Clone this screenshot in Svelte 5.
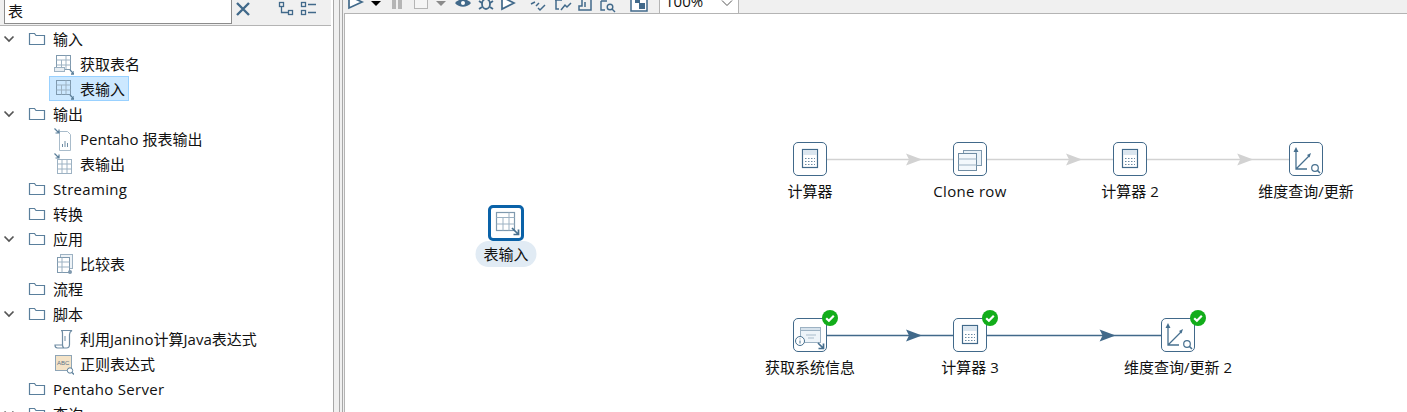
<script lang="ts">
  type Row = { label: string; kind: 'folder' | 'step'; open?: boolean; icon?: string; selected?: boolean };

  const tree: Row[] = [
    { label: '输入', kind: 'folder', open: true },
    { label: '获取表名', kind: 'step', icon: 'tablenames' },
    { label: '表输入', kind: 'step', icon: 'tablein', selected: true },
    { label: '输出', kind: 'folder', open: true },
    { label: 'Pentaho 报表输出', kind: 'step', icon: 'report' },
    { label: '表输出', kind: 'step', icon: 'tableout' },
    { label: 'Streaming', kind: 'folder' },
    { label: '转换', kind: 'folder' },
    { label: '应用', kind: 'folder', open: true },
    { label: '比较表', kind: 'step', icon: 'compare' },
    { label: '流程', kind: 'folder' },
    { label: '脚本', kind: 'folder', open: true },
    { label: '利用Janino计算Java表达式', kind: 'step', icon: 'script' },
    { label: '正则表达式', kind: 'step', icon: 'regex' },
    { label: 'Pentaho Server', kind: 'folder' },
    { label: '查询', kind: 'folder', open: true }
  ];

  // node centres on the canvas, in canvas coordinates
  const nodes = [
    { x: 465, y: 145, label: '计算器', icon: 'calc', ok: false },
    { x: 625, y: 145, label: 'Clone row', icon: 'clone', ok: false },
    { x: 785, y: 145, label: '计算器 2', icon: 'calc', ok: false },
    { x: 961, y: 145, label: '维度查询/更新', icon: 'dim', ok: false },
    { x: 465, y: 321, label: '获取系统信息', icon: 'sys', ok: true },
    { x: 625, y: 321, label: '计算器 3', icon: 'calc', ok: true },
    { x: 833, y: 321, label: '维度查询/更新 2', icon: 'dim', ok: true }
  ];

  const hops = [
    { x1: 465, x2: 625, y: 145, on: false },
    { x1: 625, x2: 785, y: 145, on: false },
    { x1: 785, x2: 961, y: 145, on: false },
    { x1: 465, x2: 625, y: 321, on: true },
    { x1: 625, x2: 833, y: 321, on: true }
  ];

  const isLatin = (s: string) => /^[\x20-\x7e]+$/.test(s);
</script>

{#snippet stepIcon(name: string)}
  <svg class="step-icon" width="24" height="24" viewBox="0 0 24 24" fill="none" stroke="#8ea5b7" stroke-width="1">
    {#if name === 'tablenames' || name === 'tablein'}
      <rect x="6.500" y="3.500" width="14" height="14" fill={name === 'tablein' ? 'none' : '#fff'} stroke="#7f99ae" />
      <path d="M6.500 8h14M6.500 13h14M11.500 8v9.500M16 3.500v14" stroke="#9db2c3" />
      {#if name === 'tablenames'}
        <rect x="4.500" y="15.500" width="10" height="4" fill="#e8eef3" stroke="#9db2c3" />
      {/if}
      <path d="M20 18l4 4M24 19v3h-3" stroke="#5b7f9a" stroke-width="1.300" />
    {:else if name === 'report'}
      <path d="M9.500 4.500h8l3 3v16h-11z" fill="#fff" stroke="#a9bccb" />
      <path d="M12.500 20v-3M15 20v-6M17.500 20v-4" stroke="#6f8ca3" />
      <path d="M4.500 1.500l4.500 4.500M9 2.500v3.500h-3.500" stroke="#5b7f9a" stroke-width="1.200" />
    {:else if name === 'tableout'}
      <rect x="7.500" y="7.500" width="14" height="14" fill="#fff" stroke="#9db2c3" />
      <path d="M7.500 12h14M7.500 17h14M12 7.500v14M17 7.500v14" stroke="#9db2c3" />
      <path d="M4.500 1.500l4.500 4.500M9 2.500v3.500h-3.500" stroke="#5b7f9a" stroke-width="1.200" />
    {:else if name === 'compare'}
      <rect x="10.500" y="2.500" width="12" height="14" fill="#eef3f7" stroke="#9db2c3" />
      <rect x="7.500" y="5.500" width="12" height="15" fill="#fff" stroke="#7f99ae" />
      <path d="M7.500 10h12M7.500 15h12M12 5.500v15" stroke="#9db2c3" />
      <circle cx="20" cy="20" r="2" fill="#7f99ae" stroke="none" />
    {:else if name === 'script'}
      <path d="M11 3.500h11c-2 1-2.500 2-2.500 4v10c0 2-1 3.500-3 3.500h-9c-2 0-2.500-1-2.500-3h7.500c0 1.500.5 2.500 1.500 2.500-1 0-1.500-1-1.500-3V6.500c0-1.500 0-3 -1.500-3z" fill="#fff" stroke="#6f8ca3" stroke-width="1.200" />
      <path d="M15 9v5" stroke="#6f8ca3" />
    {:else if name === 'regex'}
      <rect x="5.500" y="3.500" width="16" height="15" fill="#f4e3c7" stroke="#8ea5b7" />
      <text x="7" y="13" font-size="6" font-family="Liberation Sans, sans-serif" fill="#5b7289" stroke="none">ABC</text>
      <circle cx="20" cy="18.500" r="2.700" fill="#fff" stroke="#5b7f9a" />
      <path d="M22 20.500l2 2" stroke="#5b7f9a" stroke-width="1.300" />
    {/if}
  </svg>
{/snippet}

{#snippet nodeIcon(name: string)}
  <svg width="32" height="32" viewBox="0 0 32 32" fill="none">
    {#if name === 'calc'}
      <rect x="8.500" y="6.500" width="15" height="18" fill="#fff" stroke="#41698a" stroke-width="1.200" />
      <rect x="9" y="7" width="14" height="5" fill="#dbe6ef" />
      <path d="M11 15.500h10M11 18.500h10M11 21.500h10" stroke="#6b8aa3" stroke-dasharray="1.500 1.500" />
    {:else if name === 'clone'}
      <rect x="9.500" y="7.500" width="18" height="15" fill="#eaf2f8" stroke="#7f99ae" />
      <rect x="4.500" y="10.500" width="18" height="17" fill="#f3f8fc" stroke="#6f8ca3" />
      <path d="M4.500 16h18M4.500 22h18" stroke="#9db2c3" />
    {:else if name === 'dim'}
      <path d="M6 7v19h11M6 26l13-13" stroke="#47708f" stroke-width="1.300" />
      <path d="M3.500 9L6 4l2.500 5zM17 12l4-2-1.500 4.500z" fill="#47708f" />
      <circle cx="25" cy="25" r="3.300" fill="#fff" stroke="#47708f" stroke-width="1.200" />
      <path d="M27.300 27.300l2.700 2.700" stroke="#47708f" stroke-width="1.600" />
    {:else if name === 'sys'}
      <rect x="6.500" y="8.500" width="20" height="15" fill="#eef4f9" stroke="#9db2c3" />
      <rect x="6.500" y="8.500" width="20" height="3" fill="#d6e2ec" stroke="#9db2c3" />
      <path d="M12 16h10M14 19h6" stroke="#a9bccb" />
      <circle cx="6" cy="22" r="4.500" fill="#fff" stroke="#47708f" />
      <path d="M6 19.500v.8M6 21.500v3" stroke="#47708f" />
      <path d="M24 24l5 5M29.500 24.500v5h-5" stroke="#47708f" stroke-width="1.700" />
    {/if}
  </svg>
{/snippet}

<div class="app">
  <aside class="side">
    <div class="search">
      <div class="search-box">表</div>
      <svg class="clear" width="16" height="16" viewBox="0 0 16 16">
        <path d="M2 2l12 12M14 2L2 14" stroke="#41698a" stroke-width="2.400" fill="none" />
      </svg>
      <svg class="tool-a" width="16" height="16" viewBox="0 0 16 16" fill="none" stroke="#41698a" stroke-width="1.300">
        <rect x="1.500" y="1.500" width="4" height="4" />
        <rect x="10.500" y="9.500" width="4" height="4" />
        <path d="M3.500 5.500v6h7" />
      </svg>
      <svg class="tool-b" width="18" height="16" viewBox="0 0 18 16" fill="none" stroke="#41698a" stroke-width="1.300">
        <rect x="1.500" y="1.500" width="4" height="4" />
        <rect x="1.500" y="9.500" width="4" height="4" />
        <path d="M8 3.500h8M8 11.500h8" />
      </svg>
    </div>
    <ul class="tree">
      {#each tree as row}
        <li class="row" class:child={row.kind === 'step'}>
          {#if row.kind === 'folder'}
            <span class="caret">
              {#if row.open}
                <svg width="12" height="8" viewBox="0 0 12 8">
                  <path d="M1.500 1.500L6 6l4.500-4.500" fill="none" stroke="#555" stroke-width="1.700" />
                </svg>
              {/if}
            </span>
            <svg class="folder" width="18" height="14" viewBox="0 0 18 14" fill="none">
              <path d="M1.500 12.500V1.500h5l1.500 2h8.500v9z" fill="#fff" stroke="#5a7f9c" stroke-width="1.200" />
            </svg>
            <span class="label" class:latin={isLatin(row.label)}>{row.label}</span>
          {:else}
            <span class="item" class:selected={row.selected}>
              {@render stepIcon(row.icon ?? '')}
              <span class="label">{row.label}</span>
            </span>
          {/if}
        </li>
      {/each}
    </ul>
  </aside>

  <div class="sash"><span></span><span></span></div>

  <main class="work">
    <div class="toolbar">
      <svg width="18" height="13" viewBox="0 0 18 13" fill="none" stroke="#41698a" stroke-width="1.700">
        <path d="M2 -4L15 2 2 8z" fill="#fff" />
      </svg>
      <span class="drop"></span>
      <span class="pause"></span>
      <span class="stop"></span>
      <span class="drop grey"></span>
      <svg width="18" height="13" viewBox="0 0 18 13">
        <path d="M1 3c4-5 12-5 16 0-4 5-12 5-16 0z" fill="#41698a" />
        <circle cx="9" cy="3" r="2" fill="#fff" />
      </svg>
      <svg width="16" height="13" viewBox="0 0 16 13" fill="none" stroke="#41698a" stroke-width="1.800">
        <ellipse cx="8" cy="4" rx="4" ry="5" />
        <path d="M1 1l3 2M15 1l-3 2M1 9l3-2M15 9l-3-2" />
      </svg>
      <svg width="16" height="13" viewBox="0 0 16 13" fill="none" stroke="#41698a" stroke-width="1.700">
        <path d="M2 -3l12 6-12 6z" fill="#fff" />
      </svg>
      <svg width="18" height="13" viewBox="0 0 18 13" fill="none" stroke="#41698a" stroke-width="1.500">
        <path d="M1 4l4-2M6 6l3-3M8 8l2 2 5-5" />
      </svg>
      <svg width="18" height="13" viewBox="0 0 18 13" fill="none" stroke="#41698a" stroke-width="1.500">
        <path d="M1 0h7M2 0v9h3M7 10l4-5 2 2 4-4" />
      </svg>
      <svg width="14" height="13" viewBox="0 0 14 13" fill="none" stroke="#41698a" stroke-width="1.500">
        <path d="M4 -1h9v11H1V6h3zM7 2v5" />
      </svg>
      <svg width="17" height="13" viewBox="0 0 17 13" fill="none" stroke="#41698a" stroke-width="1.400">
        <path d="M1 1h6M1 1v9h4" />
        <circle cx="10" cy="7" r="2.800" />
        <path d="M12 9l3 3" />
      </svg>
      <svg width="18" height="13" viewBox="0 0 18 13">
        <rect x="1" y="-2" width="16" height="13" fill="#fff" stroke="#41698a" stroke-width="1.500" />
        <rect x="9" y="3" width="6" height="6" fill="#41698a" />
        <rect x="5" y="-1" width="5" height="4" fill="#41698a" />
      </svg>
      <div class="zoom">
        <span>100%</span>
        <svg width="12" height="7" viewBox="0 0 12 7">
          <path d="M1 0.500l5 5 5-5" fill="none" stroke="#555" />
        </svg>
      </div>
    </div>

    <div class="canvas">
      <svg class="hops" width="1062" height="399">
        {#each hops as h}
          {@const tip = h.x1 + (h.x2 - h.x1) * 0.7}
          <line x1={h.x1} x2={h.x2} y1={h.y + 0.5} y2={h.y + 0.5} stroke={h.on ? '#41698a' : '#d2d2d2'} stroke-width="1.300" />
          <path
            d="M{tip - 16} {h.y - 5.500}L{tip} {h.y + 0.5}L{tip - 16} {h.y + 6.500}L{tip - 13} {h.y + 0.5}z"
            fill={h.on ? '#41698a' : '#d2d2d2'}
          />
        {/each}
      </svg>

      {#each nodes as n}
        <div class="node" style="left:{n.x}px;top:{n.y}px">
          <div class="tile">
            {@render nodeIcon(n.icon)}
            {#if n.ok}
              <svg class="ok" width="16" height="16" viewBox="0 0 16 16">
                <circle cx="8" cy="8" r="8" fill="#12ad1a" />
                <path d="M4.200 8.200l2.700 2.600 4.900-5" fill="none" stroke="#fff" stroke-width="2.200" />
              </svg>
            {/if}
          </div>
          <span class="node-label" class:latin={isLatin(n.label)}>{n.label}</span>
        </div>
      {/each}

      <div class="node picked">
        <div class="tile">
          <svg width="32" height="32" viewBox="0 0 32 32" fill="none">
            <rect x="6.500" y="5.500" width="18" height="18" fill="#fff" stroke="#7f99ae" stroke-width="1.200" />
            <path d="M6.500 10.500h18M6.500 17h18M13 10.500v13M19 5.500v18" stroke="#9db2c3" />
            <path d="M22 21l6 6M28.500 22.500v5h-5" stroke="#47708f" stroke-width="1.700" />
          </svg>
        </div>
        <span class="node-label">表输入</span>
      </div>
    </div>
  </main>
</div>

<style>
  :global(body) {
    margin: 0;
    background: #fff;
    overflow: hidden;
  }

  .app {
    display: flex;
    width: 1407px;
    height: 412px;
    overflow: hidden;
    font-family: "Open Sans", "Noto Sans CJK SC", sans-serif;
    font-size: 15px;
    color: #111;
  }

  .latin {
    letter-spacing: 0.3px;
  }

  .side {
    width: 333px;
    flex: none;
    overflow: hidden;
  }

  .search {
    display: flex;
    align-items: flex-start;
    height: 26px;
    width: 331px;
    background: #f0f0f0;
    border-bottom: 1px solid #b4b4b4;
    box-sizing: border-box;
    padding-left: 4px;
  }

  .search-box {
    width: 228px;
    height: 24px;
    line-height: 22px;
    box-sizing: border-box;
    background: #fff;
    border: 1px solid #8c8c8c;
    border-top: none;
    padding-left: 3px;
  }

  .clear {
    margin: 1px 0 0 3px;
  }

  .tool-a {
    margin: 1px 0 0 27px;
  }

  .tool-b {
    margin: 1px 0 0 6px;
  }

  .tree {
    list-style: none;
    margin: 0;
    padding: 0;
  }

  .row {
    display: flex;
    align-items: center;
    height: 25px;
    white-space: nowrap;
  }

  .row.child {
    padding-left: 49px;
  }

  .caret {
    width: 12px;
    margin-left: 3px;
    display: flex;
  }

  .folder {
    margin-left: 13px;
    flex: none;
  }

  .folder + .label {
    margin-left: 7px;
  }

  .item {
    display: flex;
    align-items: center;
    box-sizing: border-box;
    height: 25px;
    padding-right: 3px;
    border: 1px solid transparent;
  }

  .item.selected {
    background: #cce8ff;
    border-color: #99d1ff;
  }

  .step-icon {
    flex: none;
    margin-right: 6px;
  }

  .sash {
    display: flex;
    width: 11px;
    flex: none;
    box-sizing: border-box;
    background: #f0f0f0;
    border-left: 1px solid #a8a8a8;
  }

  .sash span {
    box-sizing: border-box;
    width: 6px;
    border-right: 1px solid #a8a8a8;
  }

  .sash span + span {
    width: 3px;
  }

  .work {
    flex: 1;
    min-width: 0;
    display: flex;
    flex-direction: column;
  }

  .toolbar {
    display: grid;
    grid-template-columns: 24px 21px 22px 22px 18px 24px 22px 30px 24px 24px 22px 30px 29px 80px;
    align-items: start;
    height: 13px;
    background: #f0f0f0;
    border-bottom: 1px solid #b4b4b4;
    overflow: hidden;
    padding-left: 3px;
  }

  .drop {
    width: 0;
    height: 0;
    margin-top: 1px;
    border-left: 5px solid transparent;
    border-right: 5px solid transparent;
    border-top: 5px solid #000;
  }

  .drop.grey {
    border-top-color: #8a8a8a;
  }

  .pause {
    width: 10px;
    height: 9px;
    background: linear-gradient(to right, #b5b5b5 4px, transparent 4px, transparent 6px, #b5b5b5 6px);
  }

  .stop {
    width: 14px;
    height: 9px;
    box-sizing: border-box;
    background: #f5f5f5;
    border: 1px solid #b5b5b5;
    border-top: none;
  }

  .zoom {
    display: flex;
    justify-content: space-between;
    box-sizing: border-box;
    width: 80px;
    height: 13px;
    background: #fff;
    border-left: 1px solid #b4b4b4;
    border-right: 1px solid #b4b4b4;
    padding: 0 5px;
    overflow: hidden;
  }

  .zoom span {
    line-height: 13px;
    margin-top: -5px;
  }

  .canvas {
    position: relative;
    flex: 1;
    background: #fff;
    border-left: 1px solid #b4b4b4;
    overflow: hidden;
  }

  .hops {
    position: absolute;
    left: 0;
    top: 0;
  }

  .node {
    position: absolute;
    width: 0;
    height: 0;
  }

  .tile {
    position: absolute;
    left: -17px;
    top: -17px;
    width: 32px;
    height: 32px;
    background: #fff;
    border: 1px solid #41698a;
    border-radius: 5px;
  }

  .ok {
    position: absolute;
    right: -12px;
    top: -9px;
  }

  .node-label {
    position: absolute;
    top: 22px;
    left: 0;
    transform: translateX(-50%);
    white-space: nowrap;
    line-height: 20px;
  }

  .node.picked {
    left: 161px;
    top: 209px;
  }

  .picked .tile {
    border: 3px solid #0a62a8;
    left: -18px;
    top: -18px;
    width: 30px;
    height: 30px;
  }

  .picked .tile svg {
    margin: -1px;
  }

  .picked .node-label {
    top: 18px;
    padding: 3px 8px;
    background: #e1ebf4;
    border-radius: 13px;
  }
</style>
